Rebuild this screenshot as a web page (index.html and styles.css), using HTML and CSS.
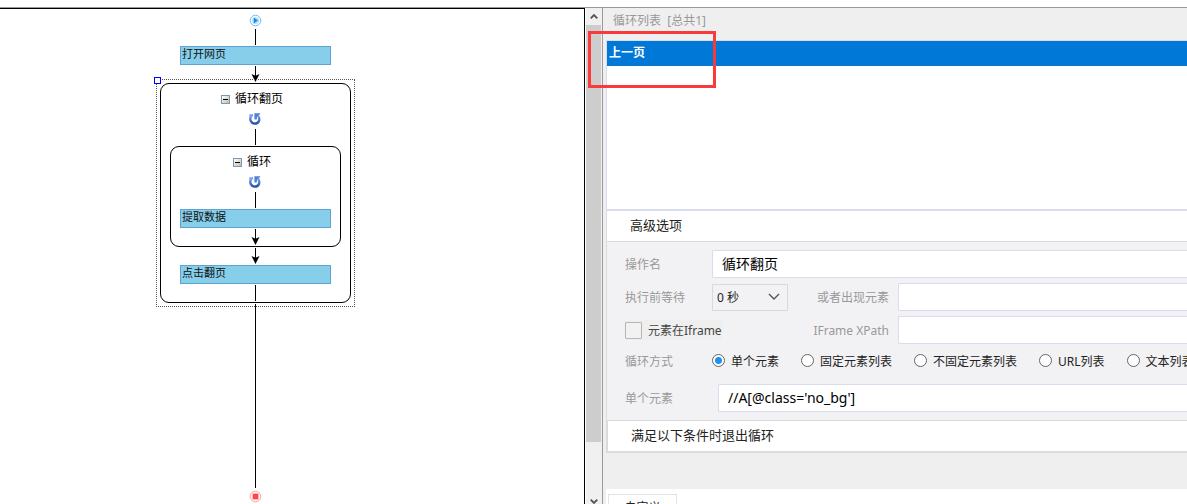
FILE: index.html
```html
<!DOCTYPE html>
<html lang="zh-CN">
<head>
  <meta charset="UTF-8" />
  <meta name="viewport" content="width=device-width, initial-scale=1.0"/>
  <title>流程设计器</title>
  <link rel="stylesheet" href="styles.css">
</head>
<body>

  <!-- Shared icons -->
  <svg class="icon-defs" aria-hidden="true">
    <linearGradient id="loop-blue" x1="0" y1="0" x2="0" y2="1">
      <stop offset="0" stop-color="#7ea6ee"/>
      <stop offset="1" stop-color="#2850b4"/>
    </linearGradient>
    <symbol id="icon-loop" viewBox="0 0 14 14">
      <path d="M3.6 3.4 C1 6.6 2.6 11.6 6.8 11.6 C11 11.6 12.6 7.4 10 3.6" fill="none" stroke="url(#loop-blue)" stroke-width="2.4"/>
      <path d="M6.4 1.2 L12.6 1.2 L10.8 3.2 L9 4.4 L8.8 7.4 L6.4 7.4 Z" fill="#4f7fdc"/>
      <path d="M1 2.6 L5 2 L5.2 4.6 L1.6 5 Z" fill="#7ea6ee"/>
    </symbol>
    <symbol id="icon-arrow" viewBox="0 0 9 16">
      <path d="M4 0 H5 V10 H4 Z M0.5 8 L4.5 9.8 L8.5 8 L4.5 16 Z"/>
    </symbol>
  </svg>

  <main class="workspace">

    <!-- Flow chart -->
    <section class="canvas">
      <div class="flow">
        <svg class="endpoint" viewBox="0 0 13 13">
          <circle cx="6.5" cy="6.5" r="5.3" fill="#fff" stroke="#6cbcf5"/>
          <circle cx="6.5" cy="6.5" r="3.6" fill="#b9e0fb"/>
          <path d="M4.8 3.6 L9 6.5 L4.8 9.4 Z" fill="#0d8df0"/>
        </svg>
        <div class="line"></div>
        <button class="step">打开网页</button>
        <svg class="arrow"><use href="#icon-arrow"/></svg>

        <div class="group selected">
          <div class="group-title"><button class="toggle" aria-label="折叠"></button>循环翻页</div>
          <svg class="loop"><use href="#icon-loop"/></svg>
          <div class="line"></div>

          <div class="group">
            <div class="group-title"><button class="toggle" aria-label="折叠"></button>循环</div>
            <svg class="loop"><use href="#icon-loop"/></svg>
            <div class="line"></div>
            <button class="step">提取数据</button>
            <svg class="arrow"><use href="#icon-arrow"/></svg>
          </div>

          <svg class="arrow"><use href="#icon-arrow"/></svg>
          <button class="step">点击翻页</button>
          <div class="line"></div>
        </div>

        <div class="line line-long"></div>
        <svg class="endpoint" viewBox="0 0 13 13">
          <circle cx="6.5" cy="6.5" r="5.3" fill="#fff" stroke="#ff9a9a"/>
          <rect x="3" y="3" width="7" height="7" rx="2" fill="#ffb0b0"/>
          <rect x="4" y="4" width="5" height="5" fill="#ff4848"/>
        </svg>
      </div>
    </section>

    <div class="scrollbar">
      <svg class="scroll-arrow" viewBox="0 0 17 16"><path d="M5 10 L8.5 6.5 L12 10"/></svg>
      <div class="thumb"></div>
      <svg class="scroll-arrow scroll-down" viewBox="0 0 17 16"><path d="M5 6 L8.5 9.5 L12 6"/></svg>
    </div>

    <!-- Settings -->
    <section class="settings">
      <h2 class="list-title">循环列表&nbsp; [总共1]</h2>
      <div class="highlight"></div>

      <div class="panel">
        <ul class="loop-list">
          <li class="active">上一页</li>
        </ul>

        <h3 class="section-title">高级选项</h3>
        <form class="options">
          <div class="row">
            <label class="name" for="action-name">操作名</label>
            <input class="text" type="text" id="action-name" value="循环翻页">
          </div>
          <div class="row">
            <label class="name" for="wait">执行前等待</label>
            <select id="wait">
              <option>0 秒</option>
            </select>
            <label class="side-name" for="wait-element">或者出现元素</label>
            <input class="text" type="text" id="wait-element">
          </div>
          <div class="row">
            <label class="check"><input type="checkbox">元素在Iframe</label>
            <label class="side-name" for="iframe-xpath">IFrame XPath</label>
            <input class="text" type="text" id="iframe-xpath">
          </div>
          <div class="row modes" role="radiogroup" aria-label="循环方式">
            <span class="name">循环方式</span>
            <label><input type="radio" name="mode" checked>单个元素</label>
            <label><input type="radio" name="mode">固定元素列表</label>
            <label><input type="radio" name="mode">不固定元素列表</label>
            <label><input type="radio" name="mode">URL列表</label>
            <label><input type="radio" name="mode">文本列表</label>
          </div>
          <div class="row xpath">
            <label class="name" for="element-xpath">单个元素</label>
            <input class="text" type="text" id="element-xpath" value="//A[@class='no_bg']">
          </div>
        </form>
        <h3 class="section-title exit-title">满足以下条件时退出循环</h3>

        <div class="tabs">
          <button class="tab">自定义</button>
        </div>
      </div>
    </section>

  </main>

</body>
</html>
```

FILE: styles.css
```css
* {
  box-sizing: border-box;
}

body {
  margin: 0;
  padding-top: 7px;
  height: 100vh;
  overflow: hidden;
  display: flex;
  flex-direction: column;
  background: #fff;
  color: #222;
  font-family: "Noto Sans", "Noto Sans CJK SC", sans-serif;
  font-size: 12px;
}

button, input, select {
  font: inherit;
  color: inherit;
  margin: 0;
}

h2, h3, ul {
  margin: 0;
  padding: 0;
  font-size: 13px;
  font-weight: normal;
}

svg {
  display: block;
  flex-shrink: 0;
}

.icon-defs {
  position: absolute;
  width: 0;
  height: 0;
}

.workspace {
  flex: 1;
  min-height: 0;
  display: grid;
  grid-template-columns: minmax(0, 1fr) 17px minmax(0, 1fr);
  grid-template-rows: minmax(0, 1fr);
  border-top: 1px solid #999;
}

/* Flow chart */
.canvas {
  display: flex;
  border-top: 1px solid #000;
  border-right: 1px solid #000;
  padding: 5px 0 0 160px;
}

.flow {
  width: 191px;
  display: flex;
  flex-direction: column;
  align-items: center;
  gap: 1px;
}

.endpoint {
  width: 13px;
  height: 13px;
  margin: 0 1px 1px 0;
}

.line {
  width: 1px;
  height: 16px;
  flex-shrink: 0;
  background: #000;
}

.line-long {
  flex: 1;
  margin-bottom: 1px;
}

.arrow {
  width: 9px;
  height: 16px;
}

.step {
  width: 151px;
  height: 19px;
  flex-shrink: 0;
  padding: 0 1px 3px;
  border: 1px solid #5ea3d3;
  background: #87ceeb;
  color: #111;
  font-size: 11px;
  line-height: 14px;
  text-align: left;
}

.group {
  position: relative;
  width: 100%;
  flex-shrink: 0;
  display: flex;
  flex-direction: column;
  align-items: center;
  gap: 1px;
  padding: 4px 9px 1px;
  border: 1px solid #000;
  border-radius: 9px;
  color: #000;
}

.group .group-title {
  display: flex;
  align-items: center;
  gap: 5px;
  height: 20px;
  margin: 0 7px 3px 0;
}

.selected::before {
  content: "";
  position: absolute;
  inset: -5px;
  border: 1px dotted #555;
  pointer-events: none;
}

.selected::after {
  content: "";
  position: absolute;
  top: -7px;
  left: -7px;
  width: 5px;
  height: 5px;
  border: 1px solid #00f;
  background: #fff;
}

.toggle {
  display: flex;
  align-items: center;
  justify-content: center;
  width: 9px;
  height: 9px;
  margin-top: 2px;
  padding: 0;
  border: 1px solid #7b98b5;
  background: linear-gradient(135deg, #fff, #c3baaa);
}

.toggle::before {
  content: "";
  width: 5px;
  height: 1px;
  background: #000;
}

.loop {
  width: 14px;
  height: 14px;
  margin: 0 1px 2px 0;
}

/* Scrollbar */
.scrollbar {
  display: flex;
  flex-direction: column;
  border-left: 1px solid #fff;
  background: #f0f0f0;
  overflow: hidden;
}

.scroll-arrow {
  width: 100%;
  height: 17px;
  fill: none;
  stroke: #555;
  stroke-width: 2;
}

.scroll-down {
  margin: auto 0 -6px;
}

.thumb {
  height: 84%;
  margin-right: 1px;
  background: #cdcdcd;
}

/* Settings */
.settings {
  position: relative;
  display: flex;
  flex-direction: column;
  padding-left: 3px;
  border-left: 1px solid #999;
  background: #efefef;
}

.list-title {
  height: 32px;
  padding: 0 7px;
  color: #999;
  font-size: 12px;
  line-height: 25px;
}

.highlight {
  position: absolute;
  top: 23px;
  left: -15px;
  width: 128px;
  height: 57px;
  border: 3px solid #f93a3a;
  pointer-events: none;
  z-index: 1;
}

.panel {
  flex: 1;
  min-height: 0;
  display: flex;
  flex-direction: column;
  overflow: hidden;
}

.loop-list {
  height: 171px;
  flex-shrink: 0;
  list-style: none;
  border: 1px solid #d8dcee;
  border-width: 1px 0 2px 1px;
  background: #fff;
  font-size: 12px;
}

.loop-list .active {
  height: 25px;
  padding-left: 2px;
  background: #0078d7;
  color: #fff;
  font-weight: bold;
  line-height: 24px;
}

.section-title {
  flex-shrink: 0;
  height: 31px;
  padding-left: 23px;
  border: 1px solid #d8dbe0;
  border-width: 0 0 1px 1px;
  background: #fff;
  line-height: 28px;
}

.exit-title {
  height: 33px;
  border-width: 1px 0 2px 2px;
}

.options {
  flex-shrink: 0;
  display: flex;
  flex-direction: column;
  gap: 5px;
  padding: 8px 0 8px 18px;
  border-left: 1px solid #d8dbe0;
  background: #f2f2f5;
}

.row {
  display: flex;
  align-items: center;
  height: 28px;
  white-space: nowrap;
}

.name {
  width: 87px;
  flex-shrink: 0;
  color: #999;
}

.side-name {
  width: 110px;
  flex-shrink: 0;
  padding-right: 9px;
  color: #999;
  text-align: right;
}

.text {
  flex: 1;
  min-width: 0;
  height: 28px;
  padding: 0 9px 2px;
  border: 1px solid #d8dcee;
  border-right: 0;
  border-radius: 2px 0 0 2px;
  background: #fff;
  color: #000;
  font-size: 14px;
}

select {
  appearance: none;
  width: 76px;
  height: 27px;
  padding: 0 4px;
  border: 1px solid #d5dbdd;
  border-radius: 0;
  background: #f2f2f5 url("data:image/svg+xml,%3Csvg xmlns='http://www.w3.org/2000/svg' width='12' height='8'%3E%3Cpath d='M1 1 L6 6 L11 1' fill='none' stroke='%23555' stroke-width='1.4'/%3E%3C/svg%3E") no-repeat right 7px center;
}

.check {
  display: flex;
  align-items: center;
  gap: 6px;
  width: 97px;
  height: 20px;
  margin-right: 66px;
  background: #efefef;
  color: #444;
}

.check input {
  appearance: none;
  width: 17px;
  height: 17px;
  border: 1px solid #b5b5b5;
  border-radius: 1px;
  background: #f2f2f2;
}

.modes {
  height: 23px;
}

.modes label {
  display: flex;
  align-items: center;
  gap: 6px;
  margin-right: 22px;
}

.modes input {
  appearance: none;
  width: 13px;
  height: 13px;
  border: 1px solid #666;
  border-radius: 50%;
  background: #fff;
}

.modes input:checked {
  background: radial-gradient(circle, #1e90f0 3px, #fff 4px);
}

.xpath {
  margin-top: 7px;
}

.xpath .name {
  width: 93px;
}

.tabs {
  flex: 1;
  margin-top: 36px;
  padding: 5px 0 0 2px;
  background: #fff;
}

.tab {
  height: 26px;
  width: 69px;
  padding: 0;
  border: 1px solid #e3e3e3;
  background: #fff;
}
```
